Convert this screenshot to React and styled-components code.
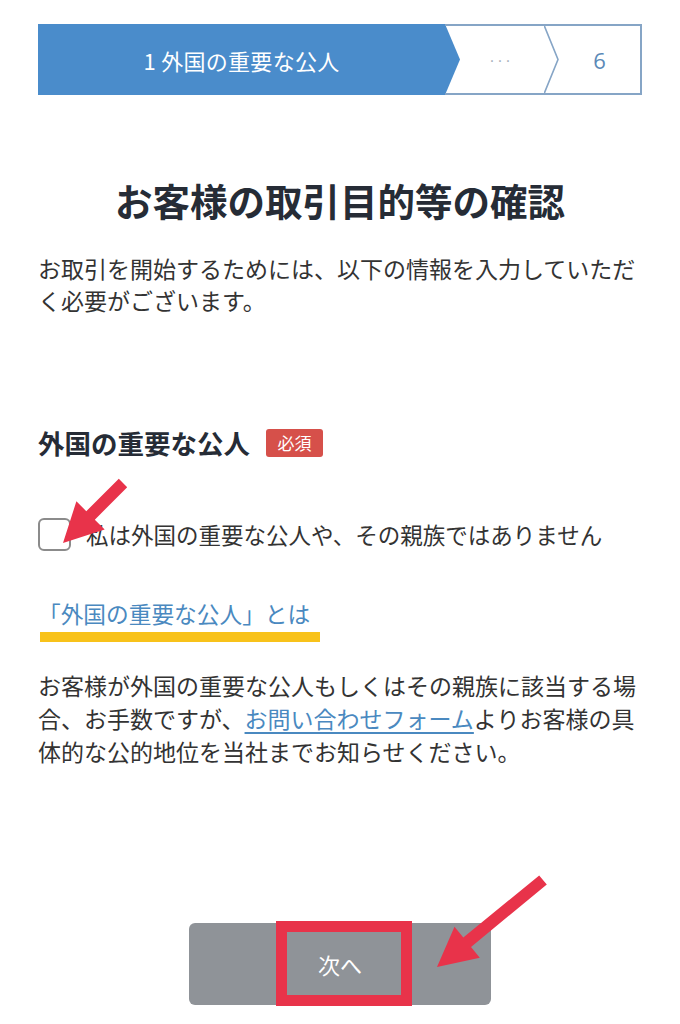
import React from "react";
import styled, { createGlobalStyle } from "styled-components";

const GlobalStyle = createGlobalStyle`
  html, body { margin: 0; padding: 0; background: #ffffff; }
  body {
    font-family: "Noto Sans CJK JP", "Noto Sans", sans-serif;
    color: #333333;
  }
  * { box-sizing: border-box; }
`;

const Page = styled.div`
  position: relative;
  width: 680px;
  padding: 24px 38px 18px;
`;

const Stepper = styled.div`
  display: flex;
  height: 71px;
  border: 2px solid #86a5c6;
  border-left: none;
`;

const ActiveStep = styled.div`
  flex: 0 0 407px;
  margin-top: -2px;
  margin-bottom: -2px;
  background: #4a8ccb;
  color: #ffffff;
  font-size: 22px;
  display: flex;
  align-items: center;
  justify-content: center;
  letter-spacing: 0.3px;
`;

const Chevron = styled.svg`
  flex: 0 0 15px;
  width: 15px;
  height: 71px;
  margin-top: -2px;
  margin-bottom: -2px;
  display: block;
`;

const Step = styled.div`
  flex: ${(p) => p.$flex || "1"};
  display: flex;
  align-items: center;
  justify-content: center;
  color: ${(p) => p.$color || "#5b89b7"};
  font-size: ${(p) => p.$size || "22px"};
  letter-spacing: ${(p) => p.$spacing || "0"};
  font-family: "Open Sans", "Noto Sans CJK JP", sans-serif;
`;

const Title = styled.h1`
  margin: 79px 0 0;
  text-align: center;
  font-size: 37.5px;
  line-height: 52px;
  font-weight: 700;
  color: #262c36;
`;

const Text = styled.p`
  margin: ${(p) => p.$margin || "0"};
  font-size: 23px;
  line-height: ${(p) => p.$lh || "32px"};
  color: #333333;
`;

const SectionHead = styled.div`
  margin-top: 109px;
  display: flex;
  align-items: center;
  gap: 16px;
  height: 36px;
`;

const SectionTitle = styled.h2`
  margin: 0;
  font-size: 26.5px;
  line-height: 36px;
  font-weight: 700;
  color: #262c36;
`;

const Badge = styled.span`
  display: inline-flex;
  align-items: center;
  justify-content: center;
  width: 57px;
  height: 28px;
  border-radius: 3px;
  background: #d6504a;
  color: #ffffff;
  font-size: 17px;
  margin-top: -1px;
`;

const CheckRow = styled.label`
  margin-top: 55px;
  display: flex;
  align-items: center;
  gap: 15px;
  height: 36px;
`;

const Box = styled.span`
  flex: 0 0 33px;
  width: 33px;
  height: 33px;
  border: 2px solid #8b8b8b;
  border-radius: 6px;
  background: #ffffff;
`;

const CheckText = styled.span`
  font-size: 22.5px;
  line-height: 36px;
  color: #333333;
`;

const InfoLink = styled.a`
  display: block;
  margin-top: 46px;
  font-size: 22.7px;
  line-height: 32px;
  color: #4a89c0;
  text-decoration: none;
`;

const Marker = styled.div`
  width: 280px;
  height: 10px;
  margin: 2px 0 0 2px;
  background: #f8c21a;
`;

const InlineLink = styled.a`
  color: #4a89c0;
  text-decoration: underline;
  text-underline-offset: 4px;
  text-decoration-thickness: 2px;
`;

const ButtonWrap = styled.div`
  margin-top: 155px;
  display: flex;
  justify-content: center;
`;

const NextButton = styled.button`
  position: relative;
  width: 302px;
  height: 82px;
  border: none;
  border-radius: 6px;
  background: #8f9398;
  color: #ffffff;
  font-family: "Noto Sans CJK JP", sans-serif;
  font-size: 22px;
  padding: 0;
`;

const Highlight = styled.span`
  position: absolute;
  left: 87px;
  top: -2px;
  width: 136px;
  height: 85px;
  border: 11px solid #e8334a;
  pointer-events: none;
`;

const Overlay = styled.svg`
  position: absolute;
  left: 0;
  top: 0;
  width: 680px;
  height: 1024px;
  pointer-events: none;
`;

function arrowPoints(tail, tip, headLen = 39, headHalf = 20, shaftHalf = 6) {
  const dx = tip[0] - tail[0];
  const dy = tip[1] - tail[1];
  const len = Math.hypot(dx, dy);
  const ux = dx / len;
  const uy = dy / len;
  const nx = -uy;
  const ny = ux;
  const bx = tip[0] - ux * headLen;
  const by = tip[1] - uy * headLen;
  const pts = [
    [tail[0] + nx * shaftHalf, tail[1] + ny * shaftHalf],
    [bx + nx * shaftHalf, by + ny * shaftHalf],
    [bx + nx * headHalf, by + ny * headHalf],
    tip,
    [bx - nx * headHalf, by - ny * headHalf],
    [bx - nx * shaftHalf, by - ny * shaftHalf],
    [tail[0] - nx * shaftHalf, tail[1] - ny * shaftHalf],
  ];
  return pts.map((p) => p.map((v) => v.toFixed(1)).join(",")).join(" ");
}

export default function App() {
  return (
    <>
      <GlobalStyle />
      <Page>
        <Stepper>
          <ActiveStep>1 外国の重要な公人</ActiveStep>
          <Chevron viewBox="0 0 15 71" preserveAspectRatio="none">
            <polygon points="0,0 15,35.5 0,71" fill="#4a8ccb" />
            <line x1="0" y1="1" x2="15" y2="1" stroke="#86a5c6" strokeWidth="2" />
            <line x1="0" y1="70" x2="15" y2="70" stroke="#86a5c6" strokeWidth="2" />
          </Chevron>
          <Step $color="#a3aeb9" $size="15px" $spacing="4px">···</Step>
          <Chevron viewBox="0 0 15 71" preserveAspectRatio="none">
            <polyline points="0,1 14,35.5 0,70" fill="none" stroke="#86a5c6" strokeWidth="1.6" />
            <line x1="0" y1="1" x2="15" y2="1" stroke="#86a5c6" strokeWidth="2" />
            <line x1="0" y1="70" x2="15" y2="70" stroke="#86a5c6" strokeWidth="2" />
          </Chevron>
          <Step $flex="0 0 81px">6</Step>
        </Stepper>

        <Title>お客様の取引目的等の確認</Title>
        <Text $margin="26px 0 0">
          お取引を開始するためには、以下の情報を入力していただく必要がございます。
        </Text>

        <SectionHead>
          <SectionTitle>外国の重要な公人</SectionTitle>
          <Badge>必須</Badge>
        </SectionHead>

        <CheckRow>
          <Box />
          <CheckText>私は外国の重要な公人や、その親族ではありません</CheckText>
        </CheckRow>

        <InfoLink href="#">「外国の重要な公人」とは</InfoLink>
        <Marker />

        <Text $margin="27px 0 0" $lh="33px">
          お客様が外国の重要な公人もしくはその親族に該当する場合、お手数ですが、
          <InlineLink href="#">お問い合わせフォーム</InlineLink>
          よりお客様の具体的な公的地位を当社までお知らせください。
        </Text>

        <ButtonWrap>
          <NextButton type="button">
            次へ
            <Highlight />
          </NextButton>
        </ButtonWrap>

        <Overlay viewBox="0 0 680 1024">
          <polygon points={arrowPoints([123, 483], [63, 543])} fill="#e8334a" />
          <polygon points={arrowPoints([543, 880], [437, 967])} fill="#e8334a" />
        </Overlay>
      </Page>
    </>
  );
}
